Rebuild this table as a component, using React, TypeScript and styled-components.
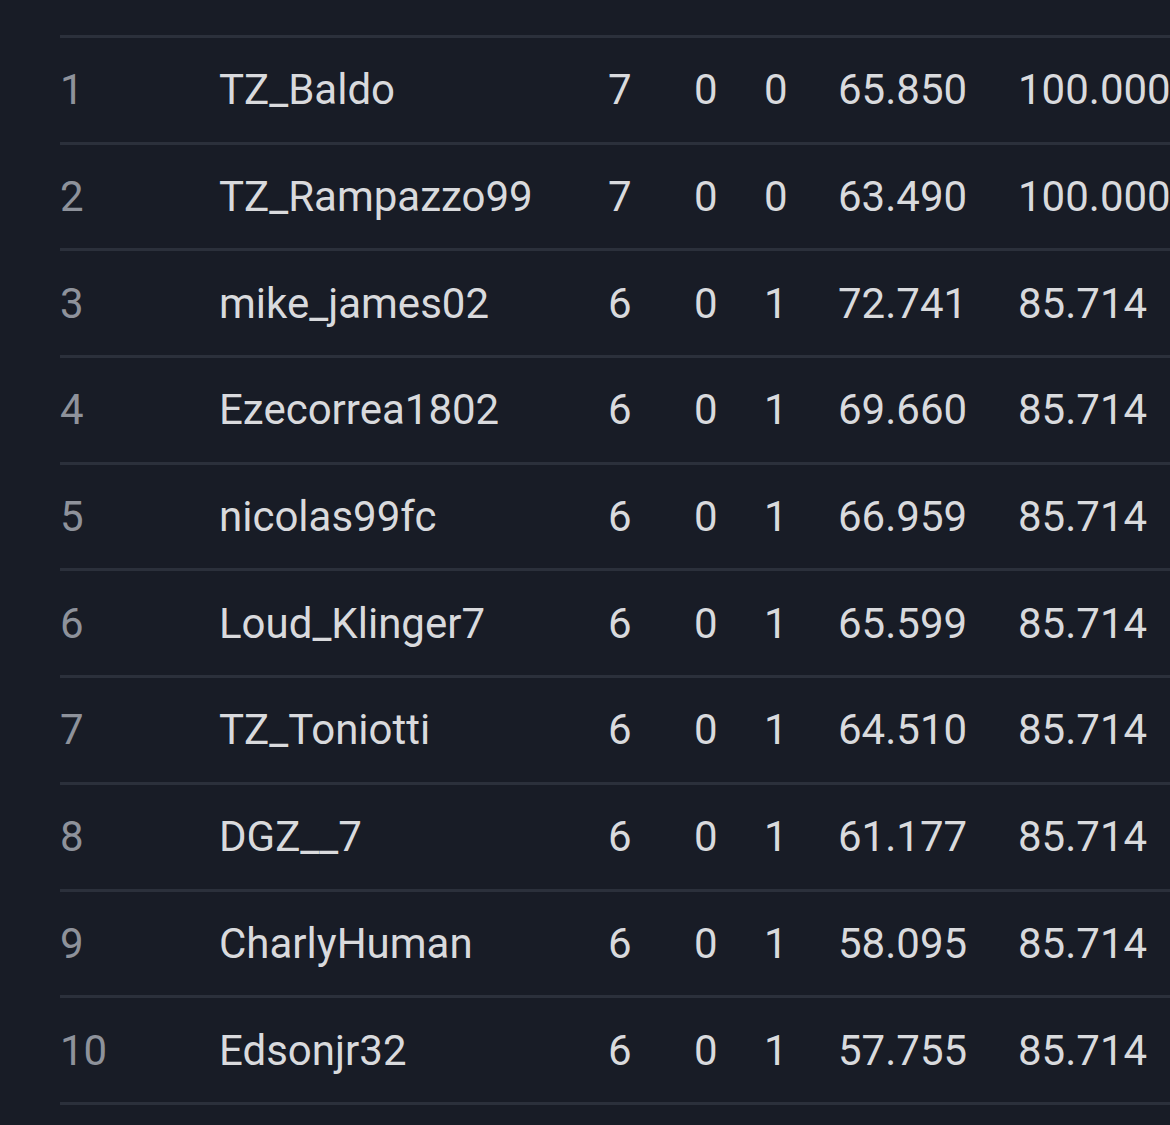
import React from "react";
import styled, { createGlobalStyle } from "styled-components";

const Global = createGlobalStyle`
  html, body {
    margin: 0;
    padding: 0;
    background: #181c26;
  }
  body {
    font-family: Roboto, "Noto Sans", sans-serif;
    overflow: hidden;
  }
`;

const Page = styled.div`
  width: 1170px;
  height: 1125px;
  overflow: hidden;
  background: #181c26;
  padding-left: 60px;
  box-sizing: border-box;
`;

const Table = styled.div`
  width: 1250px;
  display: grid;
  grid-template-columns: 135px 389px 86px 68px 76px 180px 1fr;
`;

const HeaderCell = styled.div`
  height: 35px;
  border-bottom: 3px solid #2b303b;
`;

const Cell = styled.div<{ $muted?: boolean; $pad?: number }>`
  height: 103.7px;
  border-bottom: 3px solid #2b303b;
  display: flex;
  align-items: center;
  padding-left: ${(p) => p.$pad ?? 24}px;
  font-size: 42px;
  color: ${(p) => (p.$muted ? "#8e929b" : "#d9dadd")};
  white-space: nowrap;
`;

type Row = [string, string, number, number, number, string, string];

const rows: Row[] = [
  ["1", "TZ_Baldo", 7, 0, 0, "65.850", "100.000"],
  ["2", "TZ_Rampazzo99", 7, 0, 0, "63.490", "100.000"],
  ["3", "mike_james02", 6, 0, 1, "72.741", "85.714"],
  ["4", "Ezecorrea1802", 6, 0, 1, "69.660", "85.714"],
  ["5", "nicolas99fc", 6, 0, 1, "66.959", "85.714"],
  ["6", "Loud_Klinger7", 6, 0, 1, "65.599", "85.714"],
  ["7", "TZ_Toniotti", 6, 0, 1, "64.510", "85.714"],
  ["8", "DGZ__7", 6, 0, 1, "61.177", "85.714"],
  ["9", "CharlyHuman", 6, 0, 1, "58.095", "85.714"],
  ["10", "Edsonjr32", 6, 0, 1, "57.755", "85.714"],
];

export default function App() {
  return (
    <Page>
      <Global />
      <Table>
        {Array.from({ length: 7 }).map((_, i) => (
          <HeaderCell key={`h${i}`} />
        ))}
        {rows.map((r) => (
          <React.Fragment key={r[0]}>
            <Cell $muted $pad={0}>{r[0]}</Cell>
            <Cell>{r[1]}</Cell>
            <Cell>{r[2]}</Cell>
            <Cell>{r[3]}</Cell>
            <Cell $pad={26}>{r[4]}</Cell>
            <Cell>{r[5]}</Cell>
            <Cell>{r[6]}</Cell>
          </React.Fragment>
        ))}
      </Table>
    </Page>
  );
}
